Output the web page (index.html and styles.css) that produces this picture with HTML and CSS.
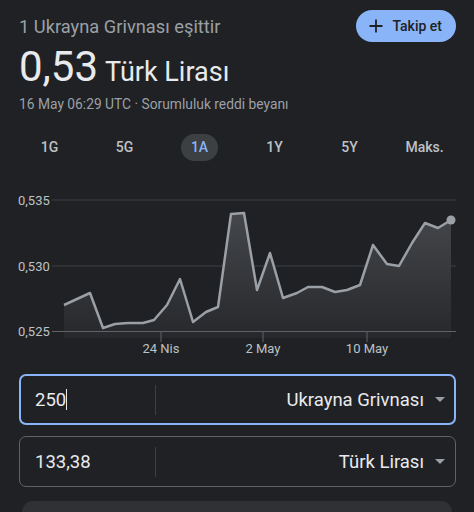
FILE: index.html
```html
<!DOCTYPE html>
<html lang="tr">
<head>
    <meta charset="UTF-8">
    <meta name="viewport" content="width=device-width, initial-scale=1.0">
    <title>Döviz çevirici</title>
    <link rel="stylesheet" href="styles.css">
</head>
<body>
    <div class="card">
        <div class="top">
            <div class="heading">
                <div class="equals">1 Ukrayna Grivnası eşittir</div>
                <div class="value"><span class="amount">0,53</span> <span class="currency">Türk Lirası</span></div>
                <div class="stamp">16 May 06:29 UTC · <span class="disclaimer">Sorumluluk reddi beyanı</span></div>
            </div>
            <button class="follow">
                <svg width="16" height="16" viewBox="0 0 16 16"><path d="M8 1.5v13M1.5 8h13" stroke="#202124" stroke-width="1.8" fill="none"/></svg>
                Takip et
            </button>
        </div>

        <div class="ranges">
            <span class="range">1G</span>
            <span class="range">5G</span>
            <span class="range active">1A</span>
            <span class="range">1Y</span>
            <span class="range">5Y</span>
            <span class="range">Maks.</span>
        </div>

        <!-- chart uses page coordinates through the viewBox -->
        <svg class="chart" width="474" height="172" viewBox="0 188 474 172">
            <defs>
                <linearGradient id="area" x1="0" y1="0" x2="0" y2="1">
                    <stop offset="0" stop-color="#48494c" stop-opacity="0.95"/>
                    <stop offset="1" stop-color="#28292c" stop-opacity="0.9"/>
                </linearGradient>
            </defs>
            <g class="grid">
                <line x1="52" y1="200" x2="456" y2="200"/>
                <line x1="52" y1="266" x2="456" y2="266"/>
            </g>
            <polygon fill="url(#area)" points="64,338 64,305 90,293 103,328 115,324 128,323 143,323 154,320 167,305 180,279 193,322 206,312 218,307 231,214 244,213 257,290 270,253 283,298 297,293 308,287 322,287 335,292 347,290 360,285 373,245 387,264 399,266 412,243 425,223 438,228 451,220 451,338"/>
            <g class="axis">
                <line x1="52" y1="331.5" x2="456" y2="331.5"/>
                <line x1="161" y1="331" x2="161" y2="342"/>
                <line x1="263" y1="331" x2="263" y2="342"/>
                <line x1="367" y1="331" x2="367" y2="342"/>
            </g>
            <polyline class="line" points="64,305 90,293 103,328 115,324 128,323 143,323 154,320 167,305 180,279 193,322 206,312 218,307 231,214 244,213 257,290 270,253 283,298 297,293 308,287 322,287 335,292 347,290 360,285 373,245 387,264 399,266 412,243 425,223 438,228 451,220"/>
            <circle cx="451" cy="220" r="4.5" fill="#9aa0a6"/>
            <g class="labels">
                <text x="18" y="205">0,535</text>
                <text x="18" y="271">0,530</text>
                <text x="18" y="336">0,525</text>
                <text x="161" y="353" text-anchor="middle">24 Nis</text>
                <text x="263" y="353" text-anchor="middle">2 May</text>
                <text x="367" y="353" text-anchor="middle">10 May</text>
            </g>
        </svg>

        <div class="converter">
            <div class="field focused">
                <div class="number">250<span class="caret"></span></div>
                <div class="unit">Ukrayna Grivnası <span class="arrow"></span></div>
            </div>
            <div class="field">
                <div class="number">133,38</div>
                <div class="unit">Türk Lirası <span class="arrow"></span></div>
            </div>
        </div>

        <div class="more"></div>
    </div>
</body>
</html>
```

FILE: styles.css
```css
body {
    margin: 0;
    background-color: #202124;
    font-family: Roboto, "Liberation Sans", sans-serif;
    color: #e8eaed;
    height: 512px;
    overflow: hidden;
}
.card {
    padding-top: 10px;
}
.top {
    display: flex;
    justify-content: space-between;
    align-items: flex-start;
    padding: 0 18px 0 19px;
}
.heading {
    padding-top: 5px;
}
.equals {
    font-size: 18.3px;
    line-height: 24px;
    color: #9aa0a6;
}
.value {
    margin-top: 6px;
    line-height: 44px;
    white-space: nowrap;
}
.amount {
    font-size: 42px;
    color: #e8eaed;
}
.currency {
    font-size: 27px;
    margin-left: 3px;
    color: #e8eaed;
}
.stamp {
    margin-top: -3px;
    font-size: 13.8px;
    line-height: 18px;
    color: #9aa0a6;
}
.follow {
    display: flex;
    align-items: center;
    gap: 8px;
    height: 32px;
    padding: 0 14px 0 12px;
    border: none;
    border-radius: 16px;
    background-color: #8ab4f8;
    color: #202124;
    font-family: Roboto, "Liberation Sans", sans-serif;
    font-size: 14px;
    font-weight: 500;
}
.ranges {
    display: grid;
    grid-template-columns: repeat(6, 1fr);
    padding: 0 12px;
    margin-top: 21px;
}
.range {
    justify-self: center;
    height: 27px;
    line-height: 27px;
    padding: 0 10px;
    border-radius: 14px;
    font-size: 14px;
    font-weight: 500;
    color: #bdc1c6;
}
.range.active {
    background-color: #3c4043;
    color: #8ab4f8;
}
.chart {
    display: block;
    margin-top: 27px;
}
.grid line {
    stroke: #3c4043;
    stroke-width: 1;
}
.axis line {
    stroke: #5f6368;
    stroke-width: 1;
}
.line {
    fill: none;
    stroke: #9aa0a6;
    stroke-width: 2.5;
    stroke-linejoin: round;
}
.labels text {
    font-family: Roboto, "Liberation Sans", sans-serif;
    font-size: 13px;
    fill: #bdc1c6;
}
.converter {
    display: flex;
    flex-direction: column;
    gap: 11px;
    padding: 0 18px 0 19px;
    margin-top: 14px;
}
.field {
    display: flex;
    align-items: center;
    height: 49px;
    border: 1px solid #5f6368;
    border-radius: 7px;
}
.field.focused {
    border: 2px solid #8ab4f8;
    height: 47px;
}
.number {
    display: flex;
    align-items: center;
    width: 120px;
    padding-left: 15px;
    height: 30px;
    border-right: 1px solid #3c4043;
    font-size: 18.5px;
    color: #e8eaed;
}
.focused .number {
    padding-left: 14px;
}
.caret {
    display: inline-block;
    width: 1px;
    height: 21px;
    background-color: #e8eaed;
}
.unit {
    flex: 1;
    display: flex;
    align-items: center;
    justify-content: flex-end;
    gap: 11px;
    padding-right: 10px;
    font-size: 18.5px;
    color: #e8eaed;
}
.focused .unit {
    padding-right: 9px;
}
.arrow {
    width: 0;
    height: 0;
    border-left: 5px solid transparent;
    border-right: 5px solid transparent;
    border-top: 5px solid #9aa0a6;
}
.more {
    margin: 14px 22px 0 22px;
    height: 11px;
    border-radius: 14px 14px 0 0;
    background-color: #303134;
}
```
